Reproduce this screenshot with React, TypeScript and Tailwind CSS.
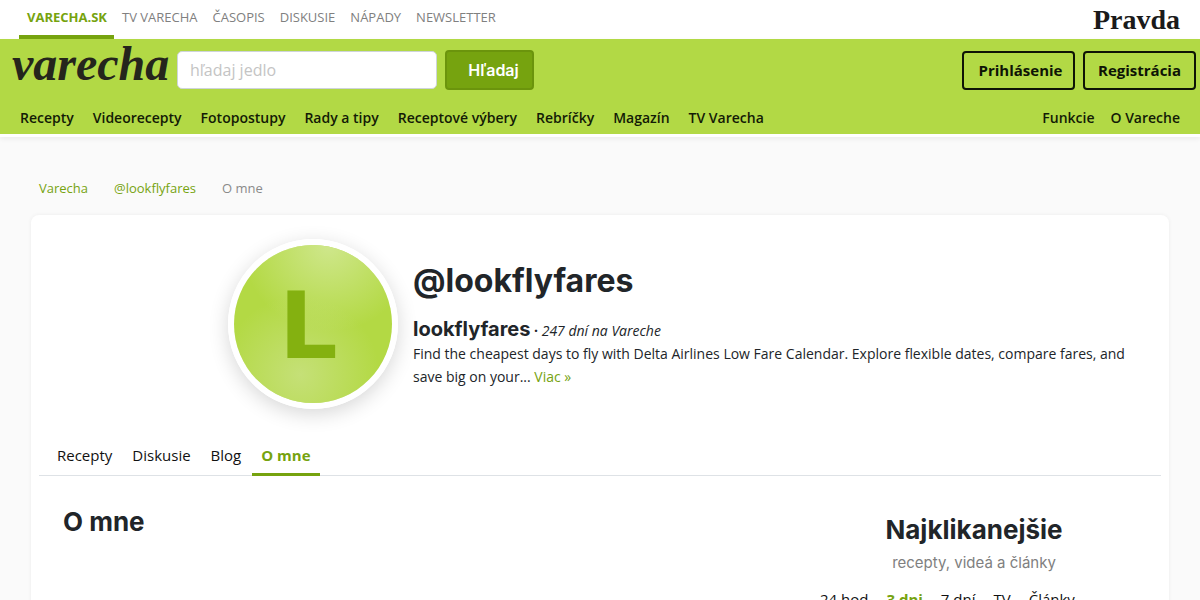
import React, { useState } from 'react';

const PORTAL_LINKS = ['VARECHA.SK', 'TV VARECHA', 'ČASOPIS', 'DISKUSIE', 'NÁPADY', 'NEWSLETTER'];
const MAIN_LINKS = [
  'Recepty',
  'Videorecepty',
  'Fotopostupy',
  'Rady a tipy',
  'Receptové výbery',
  'Rebríčky',
  'Magazín',
  'TV Varecha',
];
const SIDE_LINKS = ['Funkcie', 'O Vareche'];
const PROFILE_TABS = ['Recepty', 'Diskusie', 'Blog', 'O mne'];
const TOP_RANGES = ['24 hod', '3 dni', '7 dní', 'TV', 'Články'];

function PortalBar() {
  return (
    <div className="flex h-[39px] items-stretch justify-between bg-white pl-[19px] pr-5">
      <nav aria-label="Portál" className="flex text-[13px] text-[#808080]">
        {PORTAL_LINKS.map((label, i) => (
          <a
            key={label}
            href="#"
            className={
              i === 0
                ? 'border-b-4 border-[#76a30f] pt-2 pr-[7px] pl-2 font-bold text-[#76a30f]'
                : 'pt-2 pr-[7px] pl-2'
            }
          >
            {label}
          </a>
        ))}
      </nav>
      <a
        href="#"
        className="font-['Liberation_Serif',serif] text-[28px] leading-[40px] font-bold text-[#1a1a1a]"
      >
        Pravda
      </a>
    </div>
  );
}

function Header() {
  return (
    <header className="border-b-[3px] border-white bg-[#b2d945] shadow-[0_2px_5px_rgba(0,0,0,0.06)]">
      <div className="flex h-[62px] items-center pl-3 pr-1">
        <a
          href="#"
          className="w-[165px] pb-3 font-['Liberation_Serif',serif] text-5xl leading-none font-bold text-[#25251c] italic"
        >
          varecha
        </a>
        <form className="flex items-center gap-2" onSubmit={(e) => e.preventDefault()}>
          <input
            type="search"
            aria-label="Hľadať"
            placeholder="hľadaj jedlo"
            className="h-[38px] w-[260px] rounded-[5px] border border-[#ced4da] bg-white px-3 text-base placeholder:text-[#c4c4c4]"
          />
          <button
            type="submit"
            className="h-10 w-[89px] rounded border-2 border-[#6b940c] bg-[#76a30f] pl-2 font-['Inter',sans-serif] text-base font-semibold text-white"
          >
            Hľadaj
          </button>
        </form>
        <div className="ml-auto flex gap-2 text-[15px] font-bold text-[#0e1405]">
          <button
            type="button"
            className="h-[39px] w-[113px] rounded border-2 border-[#0e1405] pl-1"
          >
            Prihlásenie
          </button>
          <button type="button" className="h-[39px] w-[113px] rounded border-2 border-[#0e1405]">
            Registrácia
          </button>
        </div>
      </div>
      <nav
        aria-label="Hlavné menu"
        className="flex h-[33px] items-center justify-between px-5 text-[14px] font-semibold text-[#131b06]"
      >
        <div className="flex gap-[19px]">
          {MAIN_LINKS.map((label) => (
            <a key={label} href="#">
              {label}
            </a>
          ))}
        </div>
        <div className="flex gap-4">
          {SIDE_LINKS.map((label) => (
            <a key={label} href="#">
              {label}
            </a>
          ))}
        </div>
      </nav>
    </header>
  );
}

function Avatar() {
  return (
    <div className="size-[170px] overflow-hidden rounded-full border-[6px] border-white shadow-[0_5px_20px_rgba(0,0,0,0.16)]">
      <svg viewBox="0 0 158 158" className="size-full" role="img" aria-label="lookflyfares">
        <defs>
          <radialGradient id="glowTop" cx="0.6" cy="0" r="0.55">
            <stop offset="0" stopColor="#cfe78c" />
            <stop offset="1" stopColor="#cfe78c" stopOpacity="0" />
          </radialGradient>
          <radialGradient id="glowBottom" cx="0.42" cy="0.82" r="0.5">
            <stop offset="0" stopColor="#c5e077" />
            <stop offset="1" stopColor="#c5e077" stopOpacity="0" />
          </radialGradient>
        </defs>
        <rect width="158" height="158" fill="#b3d944" />
        <rect width="158" height="158" fill="url(#glowTop)" />
        <rect width="158" height="158" fill="url(#glowBottom)" />
        <text
          x="45"
          y="113"
          fontSize="92"
          fontWeight="700"
          fontFamily="'DejaVu Sans', sans-serif"
          fill="#84b110"
        >
          L
        </text>
      </svg>
    </div>
  );
}

function ProfileHead() {
  return (
    <div className="flex pt-6">
      <div className="flex w-1/3 shrink-0 justify-end pr-[15px]">
        <Avatar />
      </div>
      <div className="pt-[22px] pr-4">
        <h1 className="font-['Inter',sans-serif] text-[32px] leading-10 font-bold">
          @lookflyfares
        </h1>
        <div className="mt-4 leading-6">
          <strong className="font-['Inter',sans-serif] text-xl leading-6 font-bold">
            lookflyfares
          </strong>
          <b className="text-sm"> · </b>
          <em className="text-sm">247 dní na Vareche</em>
        </div>
        <p className="text-sm leading-[23px]">
          Find the cheapest days to fly with Delta Airlines Low Fare Calendar. Explore flexible
          dates, compare fares, and save big on your...{' '}
          <a href="#" className="text-[#76a30f]">
            Viac »
          </a>
        </p>
      </div>
    </div>
  );
}

function TopArticles() {
  return (
    <aside className="w-1/3 pt-9">
      <h2 className="text-center font-['Inter',sans-serif] text-[26px] leading-9 font-bold">
        Najklikanejšie
      </h2>
      <p className="mt-[3px] text-center font-['Inter',sans-serif] text-[15px] leading-6 text-[#808080]">
        recepty, videá a články
      </p>
      <ul className="mt-3 flex gap-[18px] pl-[33px] text-[15px] leading-6 text-[#111]">
        {TOP_RANGES.map((label) => (
          <li key={label}>
            <a href="#" className={label === '3 dni' ? 'font-bold text-[#76a30f]' : ''}>
              {label}
            </a>
          </li>
        ))}
      </ul>
    </aside>
  );
}

export default function App() {
  const [tab, setTab] = useState('O mne');

  return (
    <div className="h-screen overflow-hidden bg-[#fafafa] font-['Open_Sans',sans-serif] text-[#212529]">
      <PortalBar />
      <Header />

      <main className="px-[31px]">
        <nav
          aria-label="Navigácia"
          className="flex h-[78px] items-end gap-[26px] px-2 pb-[17px] text-[13px] text-[#76a30f]"
        >
          <a href="#">Varecha</a>
          <a href="#">@lookflyfares</a>
          <span className="text-[#8a8a8a]">O mne</span>
        </nav>

        <div className="rounded-lg bg-white px-2 pb-10 shadow-[0_0_4px_rgba(0,0,0,0.06)]">
          <ProfileHead />

          <div role="tablist" className="mt-[26px] flex gap-0.5 border-b border-[#dee2e6] pl-[9px]">
            {PROFILE_TABS.map((label) => (
              <button
                key={label}
                type="button"
                role="tab"
                aria-selected={tab === label}
                onClick={() => setTab(label)}
                className={
                  tab === label
                    ? '-mb-px h-[41px] border-b-[3px] border-[#76a30f] px-[9px] pt-[2px] text-[15px] font-bold text-[#76a30f]'
                    : '-mb-px h-[41px] border-b-[3px] border-transparent px-[9px] pt-[2px] text-[15px] text-[#111]'
                }
              >
                {label}
              </button>
            ))}
          </div>

          <div className="flex">
            <section className="w-2/3 px-6 pt-7">
              <h2 className="font-['Inter',sans-serif] text-[26px] leading-9 font-bold">{tab}</h2>
            </section>
            <TopArticles />
          </div>
        </div>
      </main>
    </div>
  );
}
